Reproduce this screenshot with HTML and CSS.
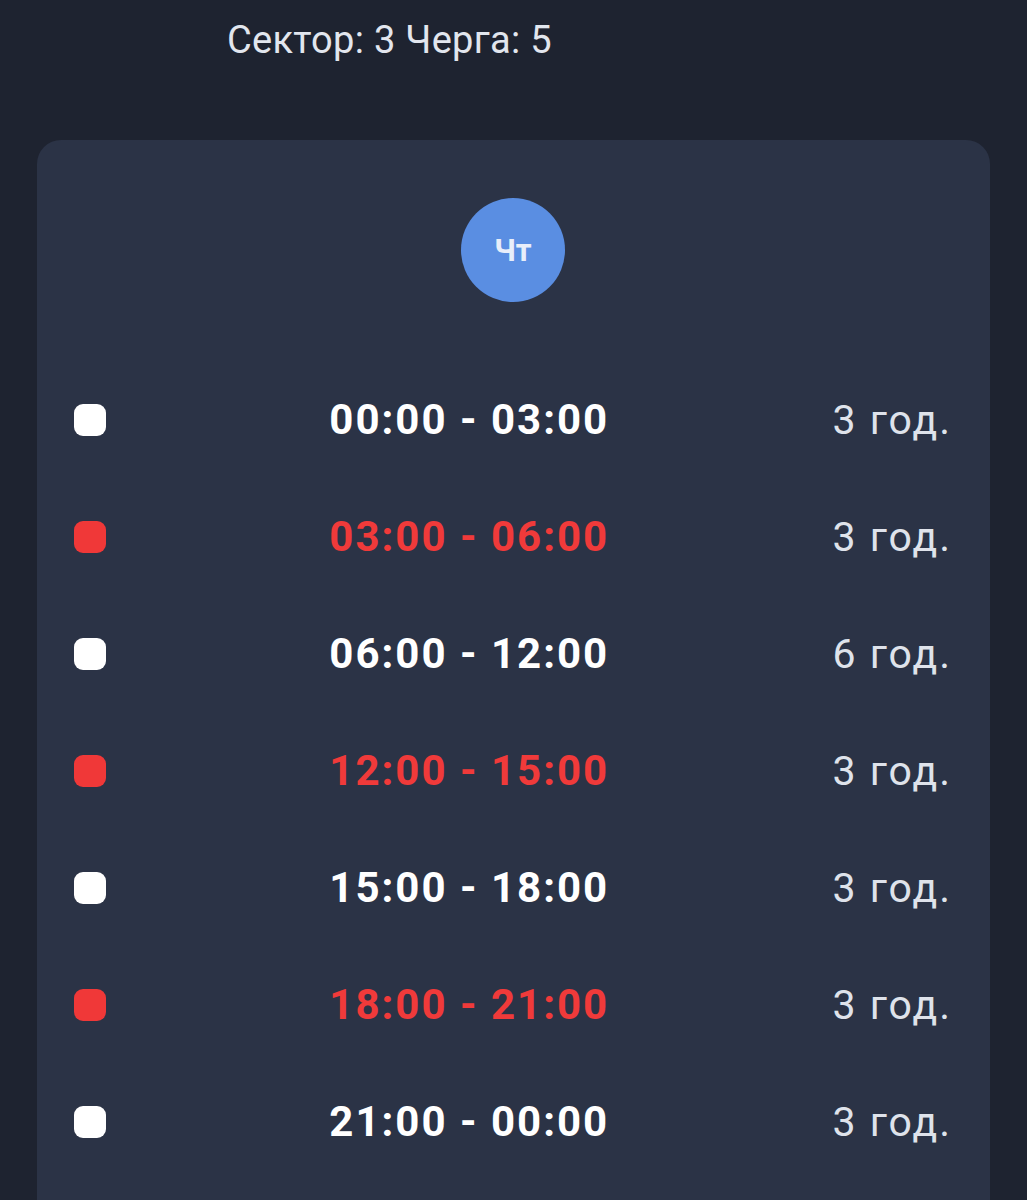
FILE: index.html
```html
<!DOCTYPE html>
<html lang="uk">
<head>
<meta charset="utf-8">
<link rel="stylesheet" href="styles.css">
</head>
<body>
<div class="header">Сектор: 3 Черга: 5</div>
<div class="card">
  <div class="day"><span>Чт</span></div>
  <div class="rows">
    <div class="row"><span class="dot"></span><span class="time">00:00 - 03:00</span><span class="dur">3 год.</span></div>
    <div class="row off"><span class="dot"></span><span class="time">03:00 - 06:00</span><span class="dur">3 год.</span></div>
    <div class="row"><span class="dot"></span><span class="time">06:00 - 12:00</span><span class="dur">6 год.</span></div>
    <div class="row off"><span class="dot"></span><span class="time">12:00 - 15:00</span><span class="dur">3 год.</span></div>
    <div class="row"><span class="dot"></span><span class="time">15:00 - 18:00</span><span class="dur">3 год.</span></div>
    <div class="row off"><span class="dot"></span><span class="time">18:00 - 21:00</span><span class="dur">3 год.</span></div>
    <div class="row"><span class="dot"></span><span class="time">21:00 - 00:00</span><span class="dur">3 год.</span></div>
  </div>
</div>
</body>
</html>
```
FILE: styles.css
```css
html, body {
  margin: 0;
  padding: 0;
  background: #1e2330;
  font-family: Roboto, "Noto Sans", sans-serif;
}
.header {
  padding: 18px 0 0 227px;
  font-size: 38px;
  line-height: 44px;
  color: #e2e6ee;
  letter-spacing: 0.3px;
}
.card {
  margin: 78px 37px 0 37px;
  background: #2b3346;
  border-radius: 24px;
  padding: 58px 38px 40px 37px;
  min-height: 1100px;
}
.day {
  display: flex;
  justify-content: center;
}
.day span {
  width: 104px;
  height: 104px;
  border-radius: 50%;
  background: #5a8ee2;
  color: #e8eefa;
  font-weight: 700;
  font-size: 31px;
  display: flex;
  align-items: center;
  justify-content: center;
}
.rows {
  margin-top: 59px;
  display: flex;
  flex-direction: column;
}
.row {
  height: 117px;
  display: flex;
  align-items: center;
  justify-content: space-between;
}
.dot {
  width: 32px;
  height: 32px;
  border-radius: 9px;
  background: #ffffff;
}
.time {
  font-size: 42px;
  font-weight: 700;
  color: #ffffff;
  letter-spacing: 2px;
}
.dur {
  font-size: 41px;
  color: #dfe3eb;
  letter-spacing: 2px;
}
.off .dot {
  background: #f03838;
}
.off .time {
  color: #f03a3a;
}
```
